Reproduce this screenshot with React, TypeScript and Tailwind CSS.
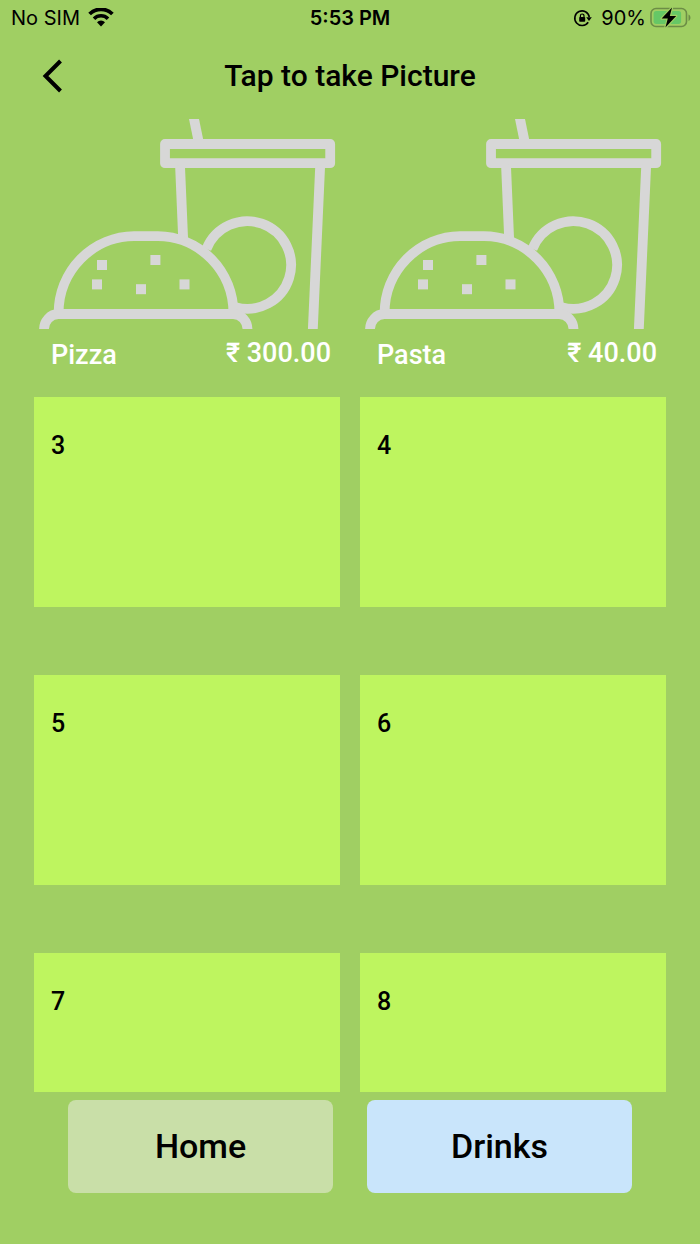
import React from "react";

interface MenuItem {
  slot: number;
  name?: string;
  price?: string;
}

const ITEMS: MenuItem[] = [
  { slot: 1, name: "Pizza", price: "₹ 300.00" },
  { slot: 2, name: "Pasta", price: "₹ 40.00" },
  { slot: 3 },
  { slot: 4 },
  { slot: 5 },
  { slot: 6 },
  { slot: 7 },
  { slot: 8 },
];

const WifiIcon = () => (
  <svg viewBox="0 0 26 20" className="h-5 w-[26px]" fill="none" stroke="black" aria-hidden="true">
    <path d="M1.6 6a16.2 16.2 0 0 1 22.8 0" strokeWidth="3.8" />
    <path d="M6 10.7a9.9 9.9 0 0 1 14 0" strokeWidth="3.6" />
    <path d="M9 14.2a5.8 5.8 0 0 1 8 0l-4 4.2z" fill="black" stroke="none" />
  </svg>
);

const RotationLockIcon = () => (
  <svg viewBox="0 0 20 18" className="h-[18px] w-5" fill="none" stroke="black" aria-hidden="true">
    <path d="M15.2 13.2A7.3 7.3 0 1 1 16.3 8" strokeWidth="1.6" />
    <path d="M13.2 8.2h5.6L16 12z" fill="black" stroke="none" />
    <rect x="6.2" y="8" width="6" height="4.8" rx=".8" fill="black" stroke="none" />
    <path d="M7.4 8.4V6.8a1.8 1.8 0 0 1 3.6 0v1.6" strokeWidth="1.2" />
  </svg>
);

const BatteryIcon = () => (
  <svg viewBox="0 0 41 22" className="h-[22px] w-[41px]" aria-hidden="true">
    <rect x="1" y="1.5" width="35.5" height="18" rx="5" fill="none" stroke="#6c8d46" strokeWidth="1.6" />
    <rect x="3.6" y="4.1" width="27.5" height="12.8" rx="2.6" fill="#66c766" />
    <path d="M38.5 7.5v6.4c2.6-1.2 2.6-5.2 0-6.4z" fill="#6c8d46" />
    <path
      d="M22 .6 11.6 11.6h6.2L15.4 20.6 26.2 9h-6.4z"
      fill="black"
      stroke="#a0cf63"
      strokeWidth="2.4"
      strokeLinejoin="round"
      paintOrder="stroke"
    />
  </svg>
);

const MealArt = () => (
  <svg
    viewBox="0 0 306 210"
    className="size-full"
    fill="none"
    stroke="#d7d7d7"
    strokeWidth="9.8"
    aria-hidden="true"
  >
    {/* cup */}
    <path d="M155 0h10l4.5 22h-10z" fill="#d7d7d7" stroke="none" />
    <rect x="131" y="25" width="165.2" height="19.2" strokeLinejoin="round" />
    <path d="M146 46l3.2 75M286.2 46l-7.4 165" />
    {/* onion ring */}
    <path d="M172.5 130a43.8 43.8 0 1 1 29 58.2" />
    {/* bun */}
    <path d="M24.6 194A76 77 0 0 1 100 117.2h24A76 77 0 0 1 199.4 194" />
    <path d="M10 211A14.5 15.5 0 0 1 24.5 195H199A14.5 15.5 0 0 1 213.5 211" />
    <g fill="#d7d7d7" stroke="none">
      <rect x="63" y="141" width="10" height="10" />
      <rect x="116.4" y="136" width="10" height="10" />
      <rect x="58" y="160.4" width="10" height="10" />
      <rect x="102" y="165.2" width="10" height="10" />
      <rect x="145.5" y="160.4" width="10" height="10" />
    </g>
  </svg>
);

const MenuTile: React.FC<{ item: MenuItem }> = ({ item }) => {
  if (!item.name) {
    return (
      <li className="h-[278px]">
        <button
          type="button"
          className="flex h-[210px] w-full items-start bg-[#bef55f] px-[17px] pt-8 text-left text-[25px] leading-[34px]"
        >
          {item.slot}
        </button>
      </li>
    );
  }

  return (
    <li className="h-[278px]">
      <button type="button" aria-label={item.name} className="block h-[210px] w-full">
        <MealArt />
      </button>
      <div className="flex justify-between pl-[17px] pr-[9px] pt-2 text-[27px] text-white">
        <span className="pt-0.5 leading-8">{item.name}</span>
        <span className="leading-8">{item.price}</span>
      </div>
    </li>
  );
};

export default function App() {
  return (
    <div className="flex h-screen flex-col bg-[#a0cf63] font-['Roboto',sans-serif] font-medium text-black">
      <div className="grid h-9 grid-cols-[1fr_auto_1fr] items-center px-[9px] font-['Inter',sans-serif] text-[20px] font-normal">
        <div className="flex items-center gap-2 pl-0.5">
          <span>No SIM</span>
          <WifiIcon />
        </div>
        <span className="font-semibold">5:53 PM</span>
        <div className="flex items-center justify-end gap-1">
          <RotationLockIcon />
          <span className="pl-1">90%</span>
          <BatteryIcon />
        </div>
      </div>

      <header className="grid h-[83px] grid-cols-[1fr_auto_1fr] items-center px-8 pb-1">
        <button type="button" aria-label="Back" className="flex size-10 items-center justify-center">
          <svg viewBox="0 0 24 36" className="h-9 w-6" fill="none" stroke="black" strokeWidth="4">
            <path d="M20.5 3 5.5 18l15 15" />
          </svg>
        </button>
        <h1 className="text-[30px] leading-9">Tap to take Picture</h1>
      </header>

      <main className="min-h-0 flex-1 overflow-hidden px-[34px]">
        <ul className="grid grid-cols-2 gap-x-5">
          {ITEMS.map((item) => (
            <MenuTile key={item.slot} item={item} />
          ))}
        </ul>
      </main>

      <nav className="grid grid-cols-2 gap-[34px] px-[68px] pb-[51px] pt-2 text-[34px]">
        <button type="button" className="h-[93px] rounded-lg bg-[#c9dfa8]">
          Home
        </button>
        <button type="button" className="h-[93px] rounded-lg bg-[#c9e5fb]">
          Drinks
        </button>
      </nav>
    </div>
  );
}
